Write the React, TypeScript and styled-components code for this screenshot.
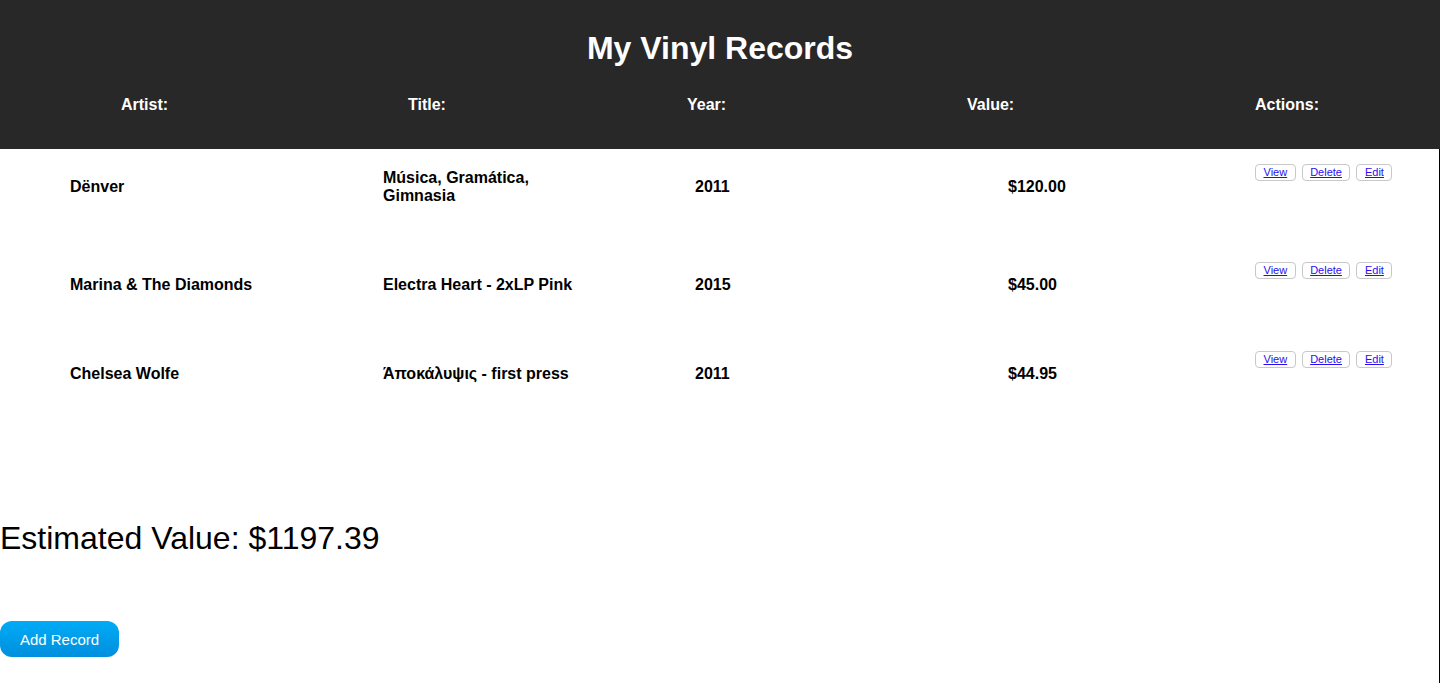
import React from "react";
import styled, { createGlobalStyle } from "styled-components";

const GlobalStyle = createGlobalStyle`
  html, body {
    margin: 0;
    padding: 0;
    background: #ffffff;
    font-family: "Liberation Sans", Arial, Helvetica, sans-serif;
    color: #000;
  }
  * { box-sizing: border-box; }
`;

const Page = styled.div`
  display: flex;
  flex-direction: column;
  min-height: 683px;
`;

const Header = styled.header`
  background: #282828;
  padding: 30px 0 35px;
  color: #fff;
`;

const Title = styled.h1`
  margin: 0;
  text-align: center;
  font-size: 32px;
  font-weight: 700;
  line-height: 37px;
`;

const HeaderRow = styled.div`
  display: grid;
  grid-template-columns: 287px 279px 280px 288px 1fr;
  padding-left: 121px;
  margin-top: 29px;
`;

const HeaderLabel = styled.div`
  font-size: 16px;
  font-weight: 700;
  line-height: 18px;
`;

const Body = styled.main`
  flex: 1;
  border-right: 1px solid #000;
  display: flex;
  flex-direction: column;
  padding-top: 15px;
`;

const RecordRow = styled.div<{ $h: number }>`
  display: grid;
  grid-template-columns: 313px 312px 313px 247px 1fr;
  padding-left: 70px;
  align-items: start;
  height: ${(p) => p.$h}px;
`;

const Cell = styled.div<{ $wrap?: boolean }>`
  display: flex;
  align-items: center;
  min-height: 45px;
  font-size: 16px;
  font-weight: 700;
  line-height: 18px;
  max-width: ${(p) => (p.$wrap ? "200px" : "none")};
`;

const Actions = styled.div`
  display: flex;
  gap: 6px;
`;

const ActionButton = styled.button`
  height: 17px;
  padding: 0 7.5px;
  border: 1px solid #c8c8c8;
  border-radius: 4px;
  background: #fff;
  font-family: "Liberation Sans", Arial, sans-serif;
  font-size: 11px;
  line-height: 15px;
  color: #2a0cf0;
  text-decoration: underline;
  cursor: pointer;
`;

const Summary = styled.h2`
  margin: 80px 0 0;
  font-size: 32px;
  font-weight: 400;
  line-height: 36px;
`;

const AddButton = styled.button`
  margin-top: 65px;
  width: 119px;
  height: 36px;
  border: none;
  border-radius: 12px;
  background: linear-gradient(#00abf6, #008fde);
  color: #fff;
  font-family: "Liberation Sans", Arial, sans-serif;
  font-size: 15px;
  padding: 0;
  cursor: pointer;
`;

const records = [
  { artist: "Dënver", title: "Música, Gramática, Gimnasia", year: "2011", value: "$120.00", h: 98 },
  { artist: "Marina & The Diamonds", title: "Electra Heart - 2xLP Pink", year: "2015", value: "$45.00", h: 89 },
  { artist: "Chelsea Wolfe", title: "Άποκάλυψις - first press", year: "2011", value: "$44.95", h: 89 },
];

export default function App() {
  return (
    <Page>
      <GlobalStyle />
      <Header>
        <Title>My Vinyl Records</Title>
        <HeaderRow>
          <HeaderLabel>Artist:</HeaderLabel>
          <HeaderLabel>Title:</HeaderLabel>
          <HeaderLabel>Year:</HeaderLabel>
          <HeaderLabel>Value:</HeaderLabel>
          <HeaderLabel>Actions:</HeaderLabel>
        </HeaderRow>
      </Header>
      <Body>
        {records.map((r) => (
          <RecordRow key={r.artist} $h={r.h}>
            <Cell>{r.artist}</Cell>
            <Cell $wrap>{r.title}</Cell>
            <Cell>{r.year}</Cell>
            <Cell>{r.value}</Cell>
            <Actions>
              <ActionButton>View</ActionButton>
              <ActionButton>Delete</ActionButton>
              <ActionButton>Edit</ActionButton>
            </Actions>
          </RecordRow>
        ))}
        <Summary>Estimated Value: $1197.39</Summary>
        <div>
          <AddButton>Add Record</AddButton>
        </div>
      </Body>
    </Page>
  );
}
